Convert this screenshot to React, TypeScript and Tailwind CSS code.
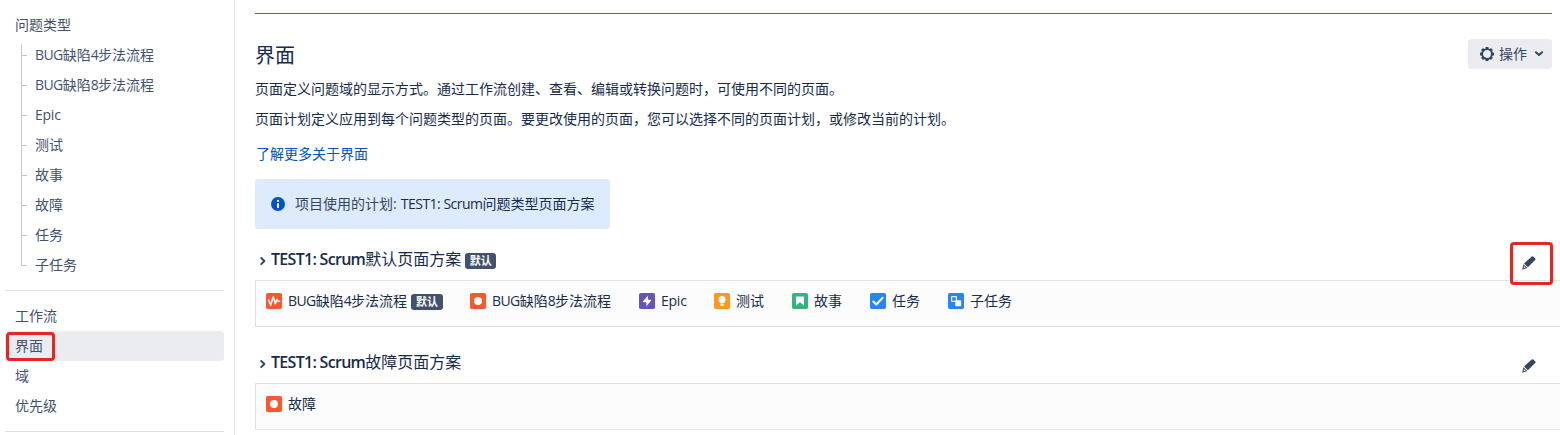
import React from "react";

type IconKind = "wave" | "bug" | "epic" | "test" | "story" | "task" | "sub";

const issueTypes = ["BUG缺陷4步法流程", "BUG缺陷8步法流程", "Epic", "测试", "故事", "故障", "任务", "子任务"];

/** Renders mixed text with slightly tightened Latin runs. */
function Mixed({ text, latin }: { text: string; latin?: string }) {
  const tracking = latin ?? (text === "Epic" ? "tracking-[-0.25px]" : "tracking-[-0.6px]");
  return (
    <span className="whitespace-pre">
      {text.split(/([\x20-\x7e]+)/).filter(Boolean).map((part, i) =>
        /^[\x20-\x7e]/.test(part) ? <span key={i} className={tracking}>{part}</span> : <React.Fragment key={i}>{part}</React.Fragment>,
      )}
    </span>
  );
}

const iconColors: Record<IconKind, string> = {
  wave: "#ff5630",
  bug: "#ff5630",
  epic: "#6554c0",
  test: "#ff991f",
  story: "#36b37e",
  task: "#2684ff",
  sub: "#2684ff",
};

function TypeIcon({ kind }: { kind: IconKind }) {
  return (
    <svg width="16" height="16" viewBox="0 0 16 16" className="shrink-0" fill="none">
      <rect width="16" height="16" rx="1.8" fill={iconColors[kind]} />
      {kind === "wave" && <path d="M2.500 7 4.700 12 7.200 3.800 9.300 10.600 11 6.500 12.200 8.300H13.500" stroke="#fff" strokeWidth="1.600" strokeLinejoin="round" strokeLinecap="round" />}
      {kind === "bug" && <circle cx="8" cy="8" r="4" fill="#fff" />}
      {kind === "epic" && <path d="M8.9 2.8 4 8.3c-.3.4-.1.9.4.9h3v4L12 7.700c.3-.4.1-.9-.4-.9H8.900z" fill="#fff" />}
      {kind === "test" && (
        <>
          <circle cx="8" cy="6.500" r="3.500" fill="#fff" />
          <path d="M6.300 8h3.400v4.200a.8.800 0 0 1-.8.800H7.100a.8.800 0 0 1-.8-.8z" fill="#fff" />
          <path d="M6 10.700h4" stroke="#ff991f" strokeWidth=".7" />
        </>
      )}
      {kind === "story" && <path d="M5 3.500h6a1 1 0 0 1 1 1v8L8 9.200 4 12.500v-8a1 1 0 0 1 1-1z" fill="#fff" />}
      {kind === "task" && <path d="m3.300 8.500 3 3 6.400-6.700" stroke="#fff" strokeWidth="2" strokeLinecap="round" strokeLinejoin="round" />}
      {kind === "sub" && (
        <>
          <rect x="3.600" y="3.600" width="4.800" height="4.800" rx=".6" stroke="#fff" strokeWidth="1.200" />
          <rect x="7.200" y="7.200" width="6" height="6" rx=".8" fill="#fff" />
        </>
      )}
    </svg>
  );
}

function Badge({ className }: { className: string }) {
  return (
    <span className={`flex h-4 shrink-0 items-center justify-center rounded-[3px] bg-[#42526e] text-[11px] font-bold leading-4 text-white ${className}`}>
      默认
    </span>
  );
}

function Pencil() {
  return (
    <svg width="14" height="14" viewBox="0 0 14 14" fill="#344563" className="shrink-0">
      <path d="M9.200.900a1.800 1.800 0 0 1 2.500 0l1.400 1.300a1.300 1.300 0 0 1 0 1.900L5.900 11.300 2 7.600z" />
      <path d="M1.500 8.300 5.300 12 .9 13.600a.5.500 0 0 1-.6-.6z" />
      <path d="m2 10 1.700 1.700-2 .7z" fill="#fff" />
    </svg>
  );
}

function Gear() {
  const teeth = [0, 45, 90, 135, 180, 225, 270, 315];
  return (
    <svg width="14" height="14" viewBox="0 0 14 14" className="shrink-0">
      <circle cx="7" cy="7" r="4.900" fill="none" stroke="#344563" strokeWidth="1.900" />
      {teeth.map((a) => (
        <rect key={a} x="5.500" y="0" width="3" height="2.200" rx=".5" fill="#344563" transform={`rotate(${a} 7 7)`} />
      ))}
    </svg>
  );
}

function NavLink({ label, active = false }: { label: string; active?: boolean }) {
  return (
    <li className={`relative ml-[5px] flex h-[30px] w-[219px] items-center rounded-[3px] pl-2.5 ${active ? "bg-[#ebecf0]" : ""}`}>
      {label}
      {active && <span className="absolute left-[1px] top-px h-[29px] w-[49px] rounded-[4px] border-[3px] border-[#ea251d]" />}
    </li>
  );
}

function Sidebar() {
  return (
    <nav className="h-[435px] w-[235px] shrink-0 border-r border-[#dfe1e6] pt-2.5 text-[#42526e]">
      <div className="flex h-[30px] items-center pl-[15px]">问题类型</div>
      <ul className="ml-[21px]">
        {issueTypes.map((label, i) => (
          <li key={label} className="flex h-[30px]">
            <span className="flex w-[14px] flex-col">
              <span className={`w-1.5 border-b border-l border-[#c1c7d0] ${i === 0 ? "mt-1 h-3" : "h-4"}`} />
              {i < issueTypes.length - 1 && <span className="w-1.5 flex-1 border-l border-[#c1c7d0]" />}
            </span>
            <span className="flex items-center"><Mixed text={label} /></span>
          </li>
        ))}
      </ul>
      <hr className="ml-[5px] mt-2.5 w-[219px] border-[#dfe1e6]" />
      <ul className="mt-2.5">
        <NavLink label="工作流" />
        <NavLink label="界面" active />
        <NavLink label="域" />
        <NavLink label="优先级" />
      </ul>
      <hr className="ml-[5px] mt-2.5 w-[219px] border-[#dfe1e6]" />
    </nav>
  );
}

interface Item { kind: IconKind; label: string; width: string; isDefault?: boolean }

function Scheme({ title, isDefault = false, items, className }: { title: string; isDefault?: boolean; items: Item[]; className: string }) {
  return (
    <section className={className}>
      <div className="flex h-10 items-center">
        <svg width="16" height="14" viewBox="0 0 16 14" className="mt-0.5 shrink-0" fill="none">
          <path d="m6.200 4 3.200 3L6.200 10.200" stroke="#344563" strokeWidth="1.900" strokeLinecap="round" strokeLinejoin="round" />
        </svg>
        <h2 className="-mt-0.5 text-base font-normal leading-6">
          <Mixed text={title} latin="font-semibold tracking-[-0.7px]" />
        </h2>
        {isDefault && <Badge className="ml-1 mt-0.5 w-[31px]" />}
        <button className={`relative ml-auto mr-6 flex ${isDefault ? "mt-[5px]" : "mt-1.5"}`} aria-label="编辑">
          <Pencil />
          {isDefault && <span className="absolute -left-3 -top-[14px] h-[43px] w-[43px] rounded-[4px] border-[3px] border-[#ea251d]" />}
        </button>
      </div>
      <div className="flex h-[47px] border border-r-0 border-[#dfe1e6] bg-[#fcfcfc] pl-2.5 pt-[9px]">
        {items.map((item) => (
          <div key={item.label} className={`flex h-[22px] shrink-0 items-center ${item.width}`}>
            <TypeIcon kind={item.kind} />
            <span className="ml-1.5"><Mixed text={item.label} /></span>
            {item.isDefault && <Badge className="ml-1 mt-px w-8" />}
          </div>
        ))}
      </div>
    </section>
  );
}

export default function App() {
  return (
    <div className="flex h-[435px] w-[1560px] overflow-hidden bg-white font-['Open_Sans','Noto_Sans_CJK_SC',sans-serif] text-sm leading-5 text-[#172b4d]">
      <Sidebar />
      <main className="w-[1325px] pl-5 pt-[13px]">
        <div className="mr-2 h-px bg-[#6a5a8c]" />
        <header className="mr-2 mt-[25px] flex h-[30px] justify-between">
          <h1 className="pt-0.5 text-xl leading-[30px]">界面</h1>
          <button className="flex h-[30px] w-[84px] items-center rounded-[3px] bg-[#ebecf0] pl-3 text-[#344563]">
            <Gear />
            <span className="ml-[5px]">操作</span>
            <svg width="10" height="8" viewBox="0 0 10 8" className="ml-[7px]" fill="none">
              <path d="m1.900 2.200 3.100 2.700 3.100-2.700" stroke="#344563" strokeWidth="2" strokeLinecap="round" strokeLinejoin="round" />
            </svg>
          </button>
        </header>
        <p className="mt-2.5 whitespace-nowrap">页面定义问题域的显示方式。通过工作流创建、查看、编辑或转换问题时，可使用不同的页面。</p>
        <p className="mt-2.5 whitespace-nowrap">页面计划定义应用到每个问题类型的页面。要更改使用的页面，您可以选择不同的页面计划，或修改当前的计划。</p>
        <a className="ml-px mt-[15px] block text-[#0052cc]">了解更多关于界面</a>
        <div className="mt-[15px] flex h-[50px] w-[355px] items-center rounded-[3px] bg-[#deebff] pl-4">
          <svg width="14" height="14" viewBox="0 0 14 14" className="shrink-0">
            <circle cx="7" cy="7" r="7" fill="#0052cc" />
            <circle cx="7" cy="3.900" r="1.100" fill="#fff" />
            <rect x="6" y="5.900" width="2" height="5" rx=".6" fill="#fff" />
          </svg>
          <span className="ml-2.5 text-[#344563]"><Mixed text="项目使用的计划: " latin="tracking-[0.2px]" /></span>
          <Mixed text="TEST1: Scrum问题类型页面方案" latin="tracking-[-0.5px]" />
        </div>
        <Scheme
          className="mt-[11px]"
          title="TEST1: Scrum默认页面方案"
          isDefault
          items={[
            { kind: "wave", label: "BUG缺陷4步法流程", width: "w-[204px]", isDefault: true },
            { kind: "bug", label: "BUG缺陷8步法流程", width: "w-[169px]" },
            { kind: "epic", label: "Epic", width: "w-[75px]" },
            { kind: "test", label: "测试", width: "w-[78px]" },
            { kind: "story", label: "故事", width: "w-[78px]" },
            { kind: "task", label: "任务", width: "w-[78px]" },
            { kind: "sub", label: "子任务", width: "w-[78px]" },
          ]}
        />
        <Scheme className="mt-4" title="TEST1: Scrum故障页面方案" items={[{ kind: "bug", label: "故障", width: "w-[78px]" }]} />
      </main>
    </div>
  );
}
